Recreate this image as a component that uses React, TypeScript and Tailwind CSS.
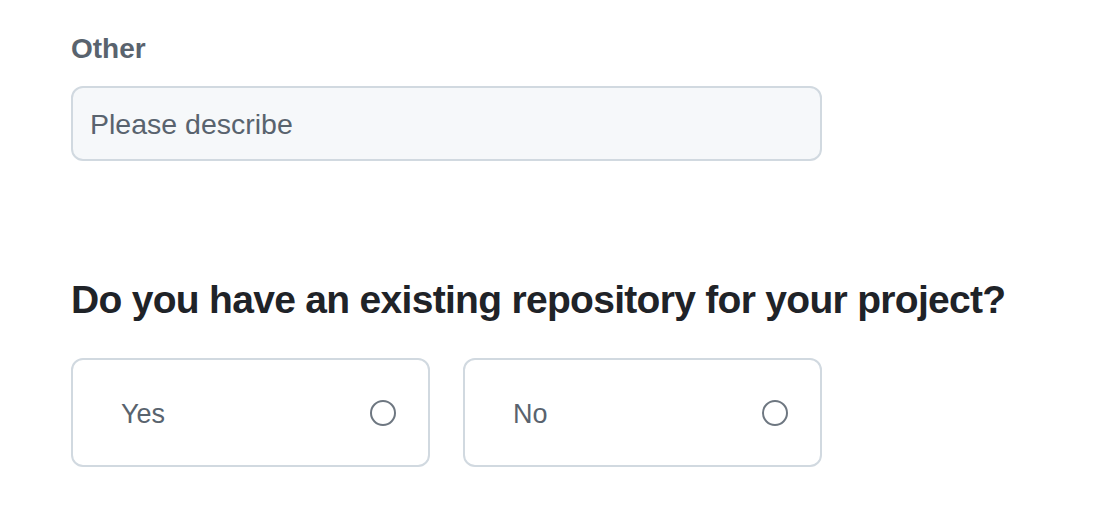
import React, { useState } from 'react';

export default function App() {
  const [choice, setChoice] = useState<string | null>(null);

  return (
    <div className="min-h-screen bg-white font-['Liberation_Sans',Arial,sans-serif]">
      <div className="w-[751px] ml-[71px] pt-[29px]">
        {/* Other field */}
        <label className="block text-[28px] leading-[40px] font-bold text-[#59636e] mb-[17px]">Other</label>
        <input
          type="text"
          placeholder="Please describe"
          className="w-full h-[75px] px-[17px] pt-[2px] rounded-[12px] border-2 border-[#d1d9e0] bg-[#f6f8fa] text-[28.5px] text-[#1f2328] placeholder:text-[#59636e] outline-none"
        />

        {/* Repository question */}
        <h2 className="mt-[113px] text-[39px] leading-[52px] font-bold text-[#1f2328] tracking-[-0.7px] whitespace-nowrap">
          Do you have an existing repository for your project?
        </h2>
        <div className="mt-[32px] grid grid-cols-2 gap-[33px]">
          {['Yes', 'No'].map((opt) => (
            <button
              key={opt}
              onClick={() => setChoice(opt)}
              className="h-[109px] flex items-center justify-between pl-[48px] pr-[32px] rounded-[12px] border-2 border-[#d1d9e0] bg-white text-left"
            >
              <span className="text-[27px] text-[#59636e] pt-[3px]">{opt}</span>
              <span className="w-[26px] h-[26px] rounded-full border-2 border-[#6e7781] flex items-center justify-center">
                {choice === opt && <span className="w-[12px] h-[12px] rounded-full bg-[#0969da]" />}
              </span>
            </button>
          ))}
        </div>
      </div>
    </div>
  );
}
